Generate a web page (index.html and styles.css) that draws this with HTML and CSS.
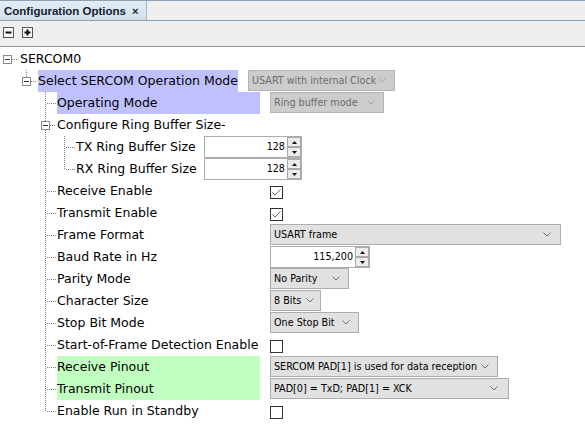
FILE: index.html
```html
<!DOCTYPE html>
<html>
<head>
<meta charset="utf-8">
<link rel="stylesheet" href="styles.css">
</head>
<body>
<div class="tabbar">
  <div class="tab"><span class="tab-title">Configuration Options</span><span class="tab-close">×</span></div>
</div>
<div class="toolbar">
  <span class="tbtn"><svg width="11" height="11" viewBox="0 0 11 11"><rect x="0.5" y="0.5" width="10" height="10" fill="#f7f7f7" stroke="#555"/><rect x="2.5" y="4.5" width="6" height="2" fill="#111"/></svg></span>
  <span class="tbtn"><svg width="11" height="11" viewBox="0 0 11 11"><rect x="0.5" y="0.5" width="10" height="10" fill="#f7f7f7" stroke="#555"/><rect x="2.5" y="4.5" width="6" height="2" fill="#111"/><rect x="4.5" y="2.5" width="2" height="6" fill="#111"/></svg></span>
</div>
<div class="tree">
  <div class="row">
    <span class="c c-box"><svg class="box" width="9" height="9" viewBox="0 0 9 9"><rect x="0.5" y="0.5" width="8" height="8" fill="#fff" stroke="#8a8a8a"/><rect x="2" y="4" width="5" height="1" fill="#333"/></svg></span>
    <span class="label lv0">SERCOM0</span>
  </div>
  <div class="row">
    <span class="c"></span>
    <span class="c c-topbox"><svg class="box" width="9" height="9" viewBox="0 0 9 9"><rect x="0.5" y="0.5" width="8" height="8" fill="#fff" stroke="#8a8a8a"/><rect x="2" y="4" width="5" height="1" fill="#333"/></svg></span>
    <span class="label lbl-sel hl-blue">Select SERCOM Operation Mode</span>
    <span class="combo disabled w-usart"><span class="combo-text">USART with internal Clock</span><svg class="chev" width="8" height="5" viewBox="0 0 8 5"><polyline points="0.5,0.5 4,4 7.5,0.5" fill="none" stroke="#a8a8a8"/></svg></span>
  </div>
  <div class="row">
    <span class="c"></span><span class="c"></span><span class="c c-tee"></span>
    <span class="label lbl2 hl-blue">Operating Mode</span>
    <span class="combo disabled w-ring"><span class="combo-text">Ring buffer mode</span><svg class="chev" width="8" height="5" viewBox="0 0 8 5"><polyline points="0.5,0.5 4,4 7.5,0.5" fill="none" stroke="#a8a8a8"/></svg></span>
  </div>
  <div class="row">
    <span class="c"></span><span class="c"></span>
    <span class="c c-teebox"><svg class="box" width="9" height="9" viewBox="0 0 9 9"><rect x="0.5" y="0.5" width="8" height="8" fill="#fff" stroke="#8a8a8a"/><rect x="2" y="4" width="5" height="1" fill="#333"/></svg></span>
    <span class="label">Configure Ring Buffer Size-</span>
  </div>
  <div class="row">
    <span class="c"></span><span class="c"></span><span class="c c-pass"></span><span class="c c-tee"></span>
    <span class="label lbl3">TX Ring Buffer Size</span>
    <span class="spin w-tx"><span class="spin-val">128</span><span class="spin-btns"><span class="sbtn"><svg width="5" height="3" viewBox="0 0 5 3"><polygon points="2.5,0 5,3 0,3" fill="#111"/></svg></span><span class="sbtn"><svg width="5" height="3" viewBox="0 0 5 3"><polygon points="0,0 5,0 2.5,3" fill="#111"/></svg></span></span></span>
  </div>
  <div class="row">
    <span class="c"></span><span class="c"></span><span class="c c-pass"></span><span class="c c-ell"></span>
    <span class="label lbl3">RX Ring Buffer Size</span>
    <span class="spin w-tx"><span class="spin-val">128</span><span class="spin-btns"><span class="sbtn"><svg width="5" height="3" viewBox="0 0 5 3"><polygon points="2.5,0 5,3 0,3" fill="#111"/></svg></span><span class="sbtn"><svg width="5" height="3" viewBox="0 0 5 3"><polygon points="0,0 5,0 2.5,3" fill="#111"/></svg></span></span></span>
  </div>
  <div class="row">
    <span class="c"></span><span class="c"></span><span class="c c-tee"></span>
    <span class="label lbl2">Receive Enable</span>
    <span class="check"><svg width="13" height="13" viewBox="0 0 13 13"><rect x="0.5" y="0.5" width="12" height="12" fill="#fff" stroke="#333"/><polyline points="2.5,6.5 5,9 10.5,3.5" fill="none" stroke="#666"/></svg></span>
  </div>
  <div class="row">
    <span class="c"></span><span class="c"></span><span class="c c-tee"></span>
    <span class="label lbl2">Transmit Enable</span>
    <span class="check"><svg width="13" height="13" viewBox="0 0 13 13"><rect x="0.5" y="0.5" width="12" height="12" fill="#fff" stroke="#333"/><polyline points="2.5,6.5 5,9 10.5,3.5" fill="none" stroke="#666"/></svg></span>
  </div>
  <div class="row">
    <span class="c"></span><span class="c"></span><span class="c c-tee"></span>
    <span class="label lbl2">Frame Format</span>
    <span class="combo w-frame"><span class="combo-text">USART frame</span><svg class="chev" width="8" height="5" viewBox="0 0 8 5"><polyline points="0.5,0.5 4,4 7.5,0.5" fill="none" stroke="#707070"/></svg></span>
  </div>
  <div class="row">
    <span class="c"></span><span class="c"></span><span class="c c-tee"></span>
    <span class="label lbl2">Baud Rate in Hz</span>
    <span class="spin w-baud"><span class="spin-val">115,200</span><span class="spin-btns"><span class="sbtn"><svg width="5" height="3" viewBox="0 0 5 3"><polygon points="2.5,0 5,3 0,3" fill="#111"/></svg></span><span class="sbtn"><svg width="5" height="3" viewBox="0 0 5 3"><polygon points="0,0 5,0 2.5,3" fill="#111"/></svg></span></span></span>
  </div>
  <div class="row">
    <span class="c"></span><span class="c"></span><span class="c c-tee"></span>
    <span class="label lbl2">Parity Mode</span>
    <span class="combo w-parity"><span class="combo-text">No Parity</span><svg class="chev" width="8" height="5" viewBox="0 0 8 5"><polyline points="0.5,0.5 4,4 7.5,0.5" fill="none" stroke="#707070"/></svg></span>
  </div>
  <div class="row">
    <span class="c"></span><span class="c"></span><span class="c c-tee"></span>
    <span class="label lbl2">Character Size</span>
    <span class="combo w-bits"><span class="combo-text">8 Bits</span><svg class="chev" width="8" height="5" viewBox="0 0 8 5"><polyline points="0.5,0.5 4,4 7.5,0.5" fill="none" stroke="#707070"/></svg></span>
  </div>
  <div class="row">
    <span class="c"></span><span class="c"></span><span class="c c-tee"></span>
    <span class="label lbl2">Stop Bit Mode</span>
    <span class="combo w-stop"><span class="combo-text">One Stop Bit</span><svg class="chev" width="8" height="5" viewBox="0 0 8 5"><polyline points="0.5,0.5 4,4 7.5,0.5" fill="none" stroke="#707070"/></svg></span>
  </div>
  <div class="row">
    <span class="c"></span><span class="c"></span><span class="c c-tee"></span>
    <span class="label lbl2">Start-of-Frame Detection Enable</span>
    <span class="check"><svg width="13" height="13" viewBox="0 0 13 13"><rect x="0.5" y="0.5" width="12" height="12" fill="#fff" stroke="#333"/></svg></span>
  </div>
  <div class="row">
    <span class="c"></span><span class="c"></span><span class="c c-tee"></span>
    <span class="label lbl2 hl-green">Receive Pinout</span>
    <span class="combo w-rx"><span class="combo-text">SERCOM PAD[1] is used for data reception</span><svg class="chev" width="8" height="5" viewBox="0 0 8 5"><polyline points="0.5,0.5 4,4 7.5,0.5" fill="none" stroke="#707070"/></svg></span>
  </div>
  <div class="row">
    <span class="c"></span><span class="c"></span><span class="c c-tee"></span>
    <span class="label lbl2 hl-green">Transmit Pinout</span>
    <span class="combo w-tx-pin"><span class="combo-text">PAD[0] = TxD; PAD[1] = XCK</span><svg class="chev" width="8" height="5" viewBox="0 0 8 5"><polyline points="0.5,0.5 4,4 7.5,0.5" fill="none" stroke="#707070"/></svg></span>
  </div>
  <div class="row">
    <span class="c"></span><span class="c"></span><span class="c c-ell"></span>
    <span class="label lbl2">Enable Run in Standby</span>
    <span class="check"><svg width="13" height="13" viewBox="0 0 13 13"><rect x="0.5" y="0.5" width="12" height="12" fill="#fff" stroke="#333"/></svg></span>
  </div>
</div>
</body>
</html>
```
FILE: styles.css
```css
html, body {
  margin: 0;
  padding: 0;
  background: #ffffff;
}
body {
  width: 585px;
  height: 428px;
  overflow: hidden;
  font-family: "DejaVu Sans", sans-serif;
}
.tabbar {
  height: 19px;
  border-top: 1px solid #8ea1b4;
  border-bottom: 1px solid #8ea1b4;
  background: #efefef;
  display: flex;
}
.tab {
  width: 142px;
  padding-left: 4px;
  display: flex;
  align-items: center;
  background: linear-gradient(#e4edf6, #d2dfec);
  border-right: 1px solid #a9b8c7;
  font-family: "Liberation Sans", Arial, sans-serif;
  font-weight: bold;
  font-size: 11.5px;
  color: #15212e;
}
.tab-title {
  line-height: 18px;
}
.tab-close {
  margin-left: 6px;
  font-size: 11px;
  line-height: 18px;
}
.toolbar {
  height: 25px;
  background: #efefef;
  border-bottom: 1px solid #8c97a3;
  display: flex;
  align-items: flex-start;
  padding-left: 3px;
  gap: 8px;
}
.tbtn {
  display: block;
  margin-top: 6px;
  width: 11px;
  height: 11px;
}
.tbtn svg {
  display: block;
}
.tree {
  padding-top: 1px;
}
.row {
  display: flex;
  align-items: flex-start;
  height: 22px;
}
.c {
  flex: none;
  width: 19px;
  height: 22px;
  display: flex;
  align-items: flex-start;
  background-repeat: no-repeat;
}
.box {
  display: block;
  margin-left: 3px;
  margin-top: 7px;
}
.c-box {
  background-image: repeating-linear-gradient(to right, #808080 0 1px, transparent 1px 2px);
  background-size: 6px 1px;
  background-position: 12px 11px;
}
.c-topbox {
  background-image:
    repeating-linear-gradient(to bottom, #808080 0 1px, transparent 1px 2px),
    repeating-linear-gradient(to right, #808080 0 1px, transparent 1px 2px);
  background-size: 1px 7px, 6px 1px;
  background-position: 7px 0, 12px 11px;
}
.c-teebox {
  background-image:
    repeating-linear-gradient(to bottom, #808080 0 1px, transparent 1px 2px),
    repeating-linear-gradient(to right, #808080 0 1px, transparent 1px 2px);
  background-size: 1px 22px, 6px 1px;
  background-position: 7px 0, 12px 11px;
}
.c-pass {
  background-image: repeating-linear-gradient(to bottom, #808080 0 1px, transparent 1px 2px);
  background-size: 1px 22px;
  background-position: 7px 0;
}
.c-tee {
  background-image:
    repeating-linear-gradient(to bottom, #808080 0 1px, transparent 1px 2px),
    repeating-linear-gradient(to right, #808080 0 1px, transparent 1px 2px);
  background-size: 1px 22px, 10px 1px;
  background-position: 7px 0, 9px 11px;
}
.c-ell {
  background-image:
    repeating-linear-gradient(to bottom, #808080 0 1px, transparent 1px 2px),
    repeating-linear-gradient(to right, #808080 0 1px, transparent 1px 2px);
  background-size: 1px 12px, 10px 1px;
  background-position: 7px 0, 9px 11px;
}
.label {
  flex: none;
  height: 22px;
  line-height: 22px;
  font-size: 12.5px;
  color: #000;
  white-space: nowrap;
}
.lv0 {
  padding-left: 1px;
}
.lbl-sel {
  width: 200px;
  margin-right: 10px;
}
.lbl2 {
  width: 203px;
  margin-right: 10px;
}
.lbl3 {
  width: 118px;
  margin-right: 10px;
}
.hl-blue {
  background: #c0c0ff;
}
.hl-green {
  background: #c0ffc0;
}
.combo {
  flex: none;
  box-sizing: border-box;
  height: 21px;
  display: flex;
  align-items: center;
  justify-content: space-between;
  padding: 0 8px 0 3px;
  background: #e1e1e1;
  border: 1px solid #adadad;
  font-family: "DejaVu Sans Condensed", "DejaVu Sans", sans-serif;
  font-stretch: condensed;
  font-size: 10.7px;
  color: #000;
  white-space: nowrap;
}
.combo.disabled {
  background: #cccccc;
  border-color: #b4b4b4;
  color: #6d6d6d;
}
.chev {
  display: block;
  flex: none;
}
.w-usart { width: 147px; }
.w-ring { width: 114px; }
.w-frame { width: 291px; padding-right: 9px; }
.w-parity { width: 79px; }
.w-bits { width: 51px; padding-right: 6px; }
.w-stop { width: 89px; }
.w-rx { width: 228px; }
.w-tx-pin { width: 239px; padding-right: 10px; }
.spin {
  flex: none;
  box-sizing: border-box;
  height: 22px;
  display: flex;
  background: #fff;
  border: 1px solid #abadb3;
  font-family: "DejaVu Sans Condensed", "DejaVu Sans", sans-serif;
  font-stretch: condensed;
  font-size: 10.7px;
  color: #000;
}
.w-tx { width: 98px; }
.w-baud { width: 100px; }
.spin-val {
  flex: 1;
  text-align: right;
  padding-right: 2px;
  line-height: 20px;
}
.spin-btns {
  width: 14px;
  display: flex;
  flex-direction: column;
}
.sbtn {
  flex: 1;
  display: flex;
  align-items: center;
  justify-content: center;
  background: #ececec;
  border: 1px solid #a9a9a9;
}
.sbtn svg {
  display: block;
}
.check {
  flex: none;
  margin-top: 6px;
  width: 13px;
  height: 13px;
}
.check svg {
  display: block;
}
```
